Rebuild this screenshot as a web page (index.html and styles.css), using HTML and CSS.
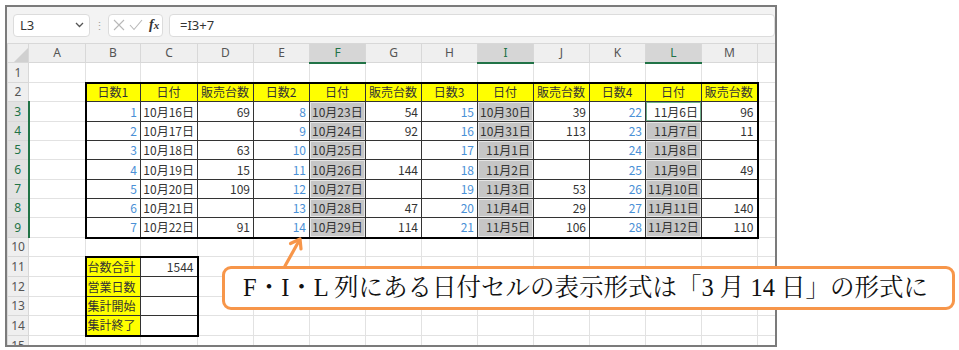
FILE: index.html
```html
<!DOCTYPE html>
<html>
    <head>
        <meta charset="utf-8">
        <title>日付セルの表示形式</title>
        <link rel="stylesheet" href="styles.css">
    </head>
    <body>
        <div class="window">
            <div class="toolbar">
                <div class="namebox">
                    <span>L3</span>
                    <svg width="9" height="6" viewBox="0 0 9 6"><polyline points="1,1 4.5,4.5 8,1" fill="none" stroke="#555" stroke-width="1.3"/></svg>
                </div>
                <div class="grip">⋮</div>
                <div class="fnbtns">
                    <svg width="12" height="12" viewBox="0 0 12 12"><path d="M1 1L11 11M11 1L1 11" stroke="#b8b8b8" stroke-width="1.1" fill="none"/></svg>
                    <svg width="14" height="12" viewBox="0 0 14 12"><polyline points="1,6 5,10.5 13,1" stroke="#b8b8b8" stroke-width="1.1" fill="none"/></svg>
                    <span class="fx"><i>f</i><i class="x">x</i></span>
                </div>
                <div class="formula">=I3+7</div>
            </div>

            <table class="sheet">
                <colgroup>
                    <col class="w-rh"><col class="w-a"><col class="w-b"><col class="w-c">
                    <col class="w-n"><col class="w-n"><col class="w-n"><col class="w-n"><col class="w-n">
                    <col class="w-n"><col class="w-n"><col class="w-n"><col class="w-n"><col class="w-n">
                    <col class="w-x">
                </colgroup>
                <tr class="hrow">
                    <th class="corner"><svg width="14" height="14" viewBox="0 0 14 14"><polygon points="14,0 14,14 0,14" fill="#d0d0d0"/></svg></th>
                    <th>A</th><th>B</th><th>C</th><th>D</th><th>E</th><th class="on">F</th><th>G</th><th>H</th><th class="on">I</th><th>J</th><th>K</th><th class="on">L</th><th>M</th><th></th>
                </tr>
                <tr class="h20">
                    <th class="rh">1</th><td></td><td class="tt"></td><td class="tt"></td><td class="tt"></td><td class="tt"></td><td class="tt"></td><td class="tt"></td><td class="tt"></td><td class="tt"></td><td class="tt"></td><td class="tt"></td><td class="tt"></td><td class="tt"></td><td></td>
                </tr>
                <tr class="h19">
                    <th class="rh">2</th><td class="tl"></td>
                    <td class="y el">日数1</td><td class="y">日付</td><td class="y">販売台数</td>
                    <td class="y">日数2</td><td class="y">日付</td><td class="y">販売台数</td>
                    <td class="y">日数3</td><td class="y">日付</td><td class="y">販売台数</td>
                    <td class="y">日数4</td><td class="y">日付</td><td class="y er">販売台数</td><td></td>
                </tr>
                <tr class="h20">
                    <th class="rh on">3</th><td></td>
                    <td class="t b el">1</td><td class="t">10月16日</td><td class="t">69</td>
                    <td class="t b">8</td><td class="t g">10月23日</td><td class="t">54</td>
                    <td class="t b">15</td><td class="t g">10月30日</td><td class="t">39</td>
                    <td class="t b">22</td><td class="t sel">11月6日</td><td class="t er">96</td><td></td>
                </tr>
                <tr class="h19">
                    <th class="rh on">4</th><td></td>
                    <td class="t b el">2</td><td class="t">10月17日</td><td class="t"></td>
                    <td class="t b">9</td><td class="t g">10月24日</td><td class="t">92</td>
                    <td class="t b">16</td><td class="t g">10月31日</td><td class="t">113</td>
                    <td class="t b">23</td><td class="t g">11月7日</td><td class="t er">11</td><td></td>
                </tr>
                <tr class="h19">
                    <th class="rh on">5</th><td></td>
                    <td class="t b el">3</td><td class="t">10月18日</td><td class="t">63</td>
                    <td class="t b">10</td><td class="t g">10月25日</td><td class="t"></td>
                    <td class="t b">17</td><td class="t g">11月1日</td><td class="t"></td>
                    <td class="t b">24</td><td class="t g">11月8日</td><td class="t er"></td><td></td>
                </tr>
                <tr class="h20">
                    <th class="rh on">6</th><td></td>
                    <td class="t b el">4</td><td class="t">10月19日</td><td class="t">15</td>
                    <td class="t b">11</td><td class="t g">10月26日</td><td class="t">144</td>
                    <td class="t b">18</td><td class="t g">11月2日</td><td class="t"></td>
                    <td class="t b">25</td><td class="t g">11月9日</td><td class="t er">49</td><td></td>
                </tr>
                <tr class="h19">
                    <th class="rh on">7</th><td></td>
                    <td class="t b el">5</td><td class="t">10月20日</td><td class="t">109</td>
                    <td class="t b">12</td><td class="t g">10月27日</td><td class="t"></td>
                    <td class="t b">19</td><td class="t g">11月3日</td><td class="t">53</td>
                    <td class="t b">26</td><td class="t g">11月10日</td><td class="t er"></td><td></td>
                </tr>
                <tr class="h19">
                    <th class="rh on">8</th><td></td>
                    <td class="t b el">6</td><td class="t">10月21日</td><td class="t"></td>
                    <td class="t b">13</td><td class="t g">10月28日</td><td class="t">47</td>
                    <td class="t b">20</td><td class="t g">11月4日</td><td class="t">29</td>
                    <td class="t b">27</td><td class="t g">11月11日</td><td class="t er">140</td><td></td>
                </tr>
                <tr class="h20">
                    <th class="rh on">9</th><td></td>
                    <td class="t b el eb">7</td><td class="t eb">10月22日</td><td class="t eb">91</td>
                    <td class="t b eb">14</td><td class="t g eb">10月29日</td><td class="t eb">114</td>
                    <td class="t b eb">21</td><td class="t g eb">11月5日</td><td class="t eb">106</td>
                    <td class="t b eb">28</td><td class="t g eb">11月12日</td><td class="t er eb">110</td><td></td>
                </tr>
                <tr class="h19">
                    <th class="rh">10</th><td></td><td></td><td></td><td></td><td></td><td></td><td></td><td></td><td></td><td></td><td></td><td></td><td></td><td></td>
                </tr>
                <tr class="h20">
                    <th class="rh">11</th><td></td>
                    <td class="lab el et">台数合計</td><td class="t er et">1544</td>
                    <td></td><td></td><td></td><td></td><td></td><td></td><td></td><td></td><td></td><td></td><td></td>
                </tr>
                <tr class="h20">
                    <th class="rh">12</th><td></td>
                    <td class="lab el">営業日数</td><td class="t er"></td>
                    <td></td><td></td><td></td><td></td><td></td><td></td><td></td><td></td><td></td><td></td><td></td>
                </tr>
                <tr class="h19">
                    <th class="rh">13</th><td></td>
                    <td class="lab el">集計開始</td><td class="t er"></td>
                    <td></td><td></td><td></td><td></td><td></td><td></td><td></td><td></td><td></td><td></td><td></td>
                </tr>
                <tr class="h20">
                    <th class="rh">14</th><td></td>
                    <td class="lab el eb">集計終了</td><td class="t er eb"></td>
                    <td></td><td></td><td></td><td></td><td></td><td></td><td></td><td></td><td></td><td></td><td></td>
                </tr>
                <tr class="h20">
                    <th class="rh">15</th><td></td><td></td><td></td><td></td><td></td><td></td><td></td><td></td><td></td><td></td><td></td><td></td><td></td><td></td>
                </tr>
            </table>
        </div>

        <!-- callout over the sheet -->
        <svg class="arrow" width="30" height="36" viewBox="0 0 30 36">
            <line x1="7" y1="32" x2="21.5" y2="6" stroke="#f7964a" stroke-width="3.2" stroke-linecap="round"/>
            <polyline points="12.5,9.5 22,5 23,15" fill="none" stroke="#f7964a" stroke-width="3.2" stroke-linecap="round" stroke-linejoin="round"/>
        </svg>
        <div class="callout">F・I・L 列にある日付セルの表示形式は「3 月 14 日」の形式に</div>
    </body>
</html>
```

FILE: styles.css
```css
body {
    margin: 0;
    position: relative;
    width: 959px;
    height: 350px;
    overflow: hidden;
    background: #fff;
    font-family: "Noto Sans CJK JP", sans-serif;
}

.window {
    margin: 5px 0 0 5px;
    width: 768px;
    height: 338px;
    border: 2px solid #7b7b7b;
    overflow: hidden;
    background: #fff;
}

/* formula bar */
.toolbar {
    height: 36px;
    display: flex;
    align-items: center;
    padding-left: 6px;
    background: #f3f3f3;
    box-sizing: border-box;
}
.namebox {
    width: 77px;
    height: 23px;
    box-sizing: border-box;
    border: 1px solid #dcdcdc;
    border-radius: 4px;
    background: #fff;
    display: flex;
    align-items: center;
    justify-content: space-between;
    padding: 0 5px 0 6px;
    font-family: "Noto Sans", sans-serif;
    font-size: 13px;
    color: #333;
}
.grip {
    width: 18px;
    text-align: center;
    color: #a0a0a0;
    font-size: 11px;
}
.fnbtns {
    width: 55px;
    height: 23px;
    box-sizing: border-box;
    border: 1px solid #dcdcdc;
    border-radius: 4px;
    background: #fff;
    display: flex;
    align-items: center;
    gap: 4px;
    padding-left: 4px;
}
.fx {
    font-family: "Liberation Serif", serif;
    font-weight: bold;
    font-size: 14px;
    color: #333;
    margin-left: 2px;
}
.fx .x {
    font-size: 11px;
}
.formula {
    flex: 1;
    margin-left: 6px;
    height: 23px;
    box-sizing: border-box;
    border: 1px solid #dcdcdc;
    border-radius: 4px;
    background: #fff;
    padding-left: 10px;
    font-family: "Noto Sans", sans-serif;
    font-size: 13px;
    line-height: 21px;
    color: #333;
}

/* sheet grid */
.sheet {
    table-layout: fixed;
    width: 768px;
    border-collapse: collapse;
    font-size: 12px;
}
.w-rh { width: 21px; }
.w-a { width: 57px; }
.w-b { width: 55px; }
.w-c { width: 57px; }
.w-n { width: 56px; }
.w-x { width: 18px; }

.hrow { height: 19px; }
.h19 { height: 19px; }
.h20 { height: 20px; }

th {
    background: #efefef;
    border: 1px solid #d8d8d8;
    font-family: "Noto Sans", sans-serif;
    font-weight: normal;
    font-size: 12px;
    color: #555;
    padding: 0;
    line-height: 1;
}
th.on {
    background: #d6d6d6;
    color: #217346;
    border-bottom: 2px solid #217346;
}
th.rh.on {
    background: #e2e2e2;
    border-bottom: 1px solid #d8d8d8;
    border-right: 2px solid #217346;
}
.corner {
    text-align: right;
    vertical-align: bottom;
}
.corner svg {
    display: block;
    margin-left: auto;
}

td {
    border: 1px solid #e2e2e2;
    padding: 0 3px 0 2px;
    white-space: nowrap;
    overflow: hidden;
    line-height: 1;
    color: #333;
}
.t {
    border: 1px solid #333;
    text-align: right;
}
.b { color: #4a90d6; }
.g {
    background: #c6c6c6;
    box-shadow: inset 0 0 0 1px #e6e6e6;
}
.sel {
    background: #fff;
    box-shadow: inset 0 0 0 1px #6fae8c;
}
.y {
    background: #ffff00;
    border: 1px solid #333;
    border-top: 2px solid #000;
    text-align: center;
    color: #333;
}
.lab {
    background: #ffff00;
    border: 1px solid #333;
    text-align: left;
    color: #333;
    padding-left: 1px;
}

/* thick outline of the data blocks */
.tt { border-bottom: 2px solid #000; }
.tl { border-right: 2px solid #000; }
.el { border-left: 2px solid #000; }
.er { border-right: 2px solid #000; }
.et { border-top: 2px solid #000; }
.eb { border-bottom: 2px solid #000; }

/* orange note */
.arrow {
    position: absolute;
    left: 278px;
    top: 234px;
}
.callout {
    position: absolute;
    left: 222px;
    top: 266px;
    width: 733px;
    height: 44px;
    box-sizing: border-box;
    border: 3px solid #f7964a;
    border-radius: 9px;
    background: #fff;
    padding-left: 18px;
    font-family: "Liberation Serif", "Noto Serif CJK JP", "Noto Sans CJK JP", serif;
    font-size: 24.5px;
    line-height: 38px;
    color: #111;
    white-space: nowrap;
}
```
